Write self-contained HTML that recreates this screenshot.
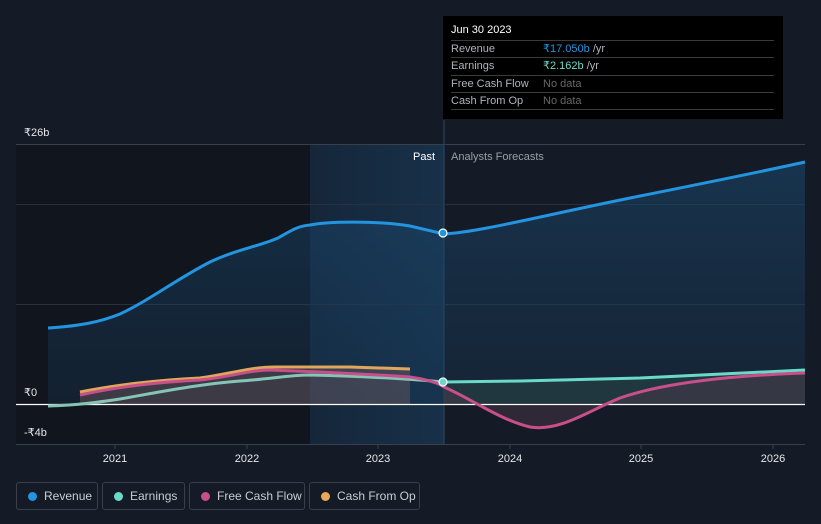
<!DOCTYPE html>
<html><head><meta charset="utf-8"><style>
html,body{margin:0;padding:0;background:#151b26;width:821px;height:524px;overflow:hidden;font-family:"Liberation Sans",sans-serif}
svg{position:absolute;left:0;top:0}
.leg{position:absolute;top:482px;height:28px;border:1px solid #3a404b;border-radius:3px;box-sizing:border-box;color:#c9ccd1;font-size:12px;line-height:26px}
.leg i{position:absolute;left:11px;top:9px;width:9px;height:9px;border-radius:50%}
.leg span{position:absolute;left:27px;top:0;white-space:nowrap}
.tip{position:absolute;left:443px;top:16px;width:340px;height:103px;background:#000}
.tip .h{position:absolute;left:8px;top:8px;color:#fff;font-size:11px}
.row{position:absolute;left:8px;width:323px;border-top:1px solid #3a3a3a;height:17px;font-size:11px;line-height:17px}
.row .a{position:absolute;left:0;color:#b0b3b8}
.row .b{position:absolute;left:92px;color:#666}
</style></head><body>
<svg width="821" height="524" viewBox="0 0 821 524">
<defs>
<linearGradient id="hl" x1="0" x2="1"><stop offset="0" stop-color="#16263a"/><stop offset="1" stop-color="#173149"/></linearGradient>
<linearGradient id="rf" x1="0" y1="0" x2="0" y2="1"><stop offset="0" stop-color="#1a4a72" stop-opacity="0.7"/><stop offset="1" stop-color="#173a5a" stop-opacity="0.4"/></linearGradient>
</defs>
<rect x="16" y="144" width="294" height="300" fill="#11151d"/>
<rect x="310" y="144" width="134" height="300" fill="url(#hl)"/>
<line x1="444" y1="120" x2="444" y2="444" stroke="#2a4a66" stroke-width="1"/>
<line x1="16" y1="144.5" x2="805" y2="144.5" stroke="#3a404b"/>
<line x1="16" y1="204.5" x2="805" y2="204.5" stroke="#2a303b"/>
<line x1="16" y1="304.5" x2="805" y2="304.5" stroke="#2a303b"/>
<line x1="16" y1="444.5" x2="805" y2="444.5" stroke="#3a404b"/>
<g stroke="#3a404b"><line x1="115" y1="444" x2="115" y2="449"/><line x1="247" y1="444" x2="247" y2="449"/><line x1="378" y1="444" x2="378" y2="449"/><line x1="510" y1="444" x2="510" y2="449"/><line x1="641" y1="444" x2="641" y2="449"/><line x1="773" y1="444" x2="773" y2="449"/></g>
<path d="M48,328 C80,326 100,322 120,314 C150,300 175,280 210,262 C235,250 260,246 278,238 C292,230 298,226 310,225 C330,221 380,221 410,226 L444,234 C480,232 540,216 640,196 C720,180 760,172 805,162 L805,404 L48,404Z" fill="url(#rf)" opacity="0.75"/>
<path d="M80,392 C120,384 160,380 200,378 C230,374 250,367 275,367 L350,367 L410,369 L410,404 L80,404Z" fill="#8a6a6a" opacity="0.35"/>
<path d="M444,382 L520,381 L640,378 L805,370 L805,404 L444,404Z" fill="#2a4a4a" opacity="0.5"/>
<path d="M444,387 C470,398 500,420 530,427 C560,432 590,410 620,398 C660,384 720,376 805,373 L805,404 L444,404Z" fill="#4a3848" opacity="0.5"/>
<path d="M48,328 C80,326 100,322 120,314 C150,300 175,280 210,262 C235,250 260,246 278,238 C292,230 298,226 310,225 C330,221 380,221 410,226 L444,234 C480,232 540,216 640,196 C720,180 760,172 805,162" fill="none" stroke="#2394e0" stroke-width="3"/>
<line x1="16" y1="404.5" x2="805" y2="404.5" stroke="#fff" stroke-width="1.2"/>
<path d="M80,392 C120,384 160,380 200,378 C230,374 250,367 275,367 L350,367 L410,369" fill="none" stroke="#e0a65a" stroke-width="3"/>
<path d="M48,406 C80,405 100,402 120,399 C160,392 200,384 240,381 C270,379 290,375 310,375 C350,376 400,378 444,382" fill="none" stroke="#86c4b6" stroke-width="3"/>
<path d="M444,382 L520,381 L640,378 L805,370" fill="none" stroke="#6ad9c7" stroke-width="3"/>
<path d="M80,395 C120,386 160,382 200,380 C230,377 250,370 270,370 C300,371 350,373 410,377 C430,380 440,384 444,387 C470,398 500,420 530,427 C560,432 590,410 620,398 C660,384 720,376 805,373" fill="none" stroke="#c94f8b" stroke-width="3"/>
<circle cx="443" cy="233" r="4" fill="#2394e0" stroke="#fff" stroke-width="1.2"/>
<circle cx="443" cy="382" r="4" fill="#6ad9c7" stroke="#fff" stroke-width="1.2"/>
<g font-family="Liberation Sans,sans-serif" font-size="11" fill="#e6e6e6">
<text x="24" y="136">₹26b</text><text x="24" y="396">₹0</text><text x="24" y="436">-₹4b</text>
<text x="115" y="462" text-anchor="middle">2021</text><text x="247" y="462" text-anchor="middle">2022</text><text x="378" y="462" text-anchor="middle">2023</text><text x="510" y="462" text-anchor="middle">2024</text><text x="641" y="462" text-anchor="middle">2025</text><text x="773" y="462" text-anchor="middle">2026</text>
<text x="435" y="160" text-anchor="end" fill="#fff">Past</text>
<text x="451" y="160" fill="#9a9ea6">Analysts Forecasts</text>
</g>
</svg>
<div class="tip"><div class="h">Jun 30 2023</div>
<div class="row" style="top:24px"><span class="a">Revenue</span><span class="b" style="color:#2394e0">₹17.050b <span style="color:#b0b3b8">/yr</span></span></div>
<div class="row" style="top:41px"><span class="a">Earnings</span><span class="b" style="color:#6ad9c7">₹2.162b <span style="color:#b0b3b8">/yr</span></span></div>
<div class="row" style="top:59px"><span class="a">Free Cash Flow</span><span class="b">No data</span></div>
<div class="row" style="top:76px"><span class="a">Cash From Op</span><span class="b">No data</span></div>
<div class="row" style="top:93px;height:0"></div>
</div>
<div class="leg" style="left:16px;width:82px"><i style="background:#2394e0"></i><span>Revenue</span></div>
<div class="leg" style="left:102px;width:83px"><i style="background:#6ad9c7"></i><span>Earnings</span></div>
<div class="leg" style="left:189px;width:116px"><i style="background:#c94f8b"></i><span>Free Cash Flow</span></div>
<div class="leg" style="left:309px;width:111px"><i style="background:#e8a855"></i><span>Cash From Op</span></div>
</body></html>
